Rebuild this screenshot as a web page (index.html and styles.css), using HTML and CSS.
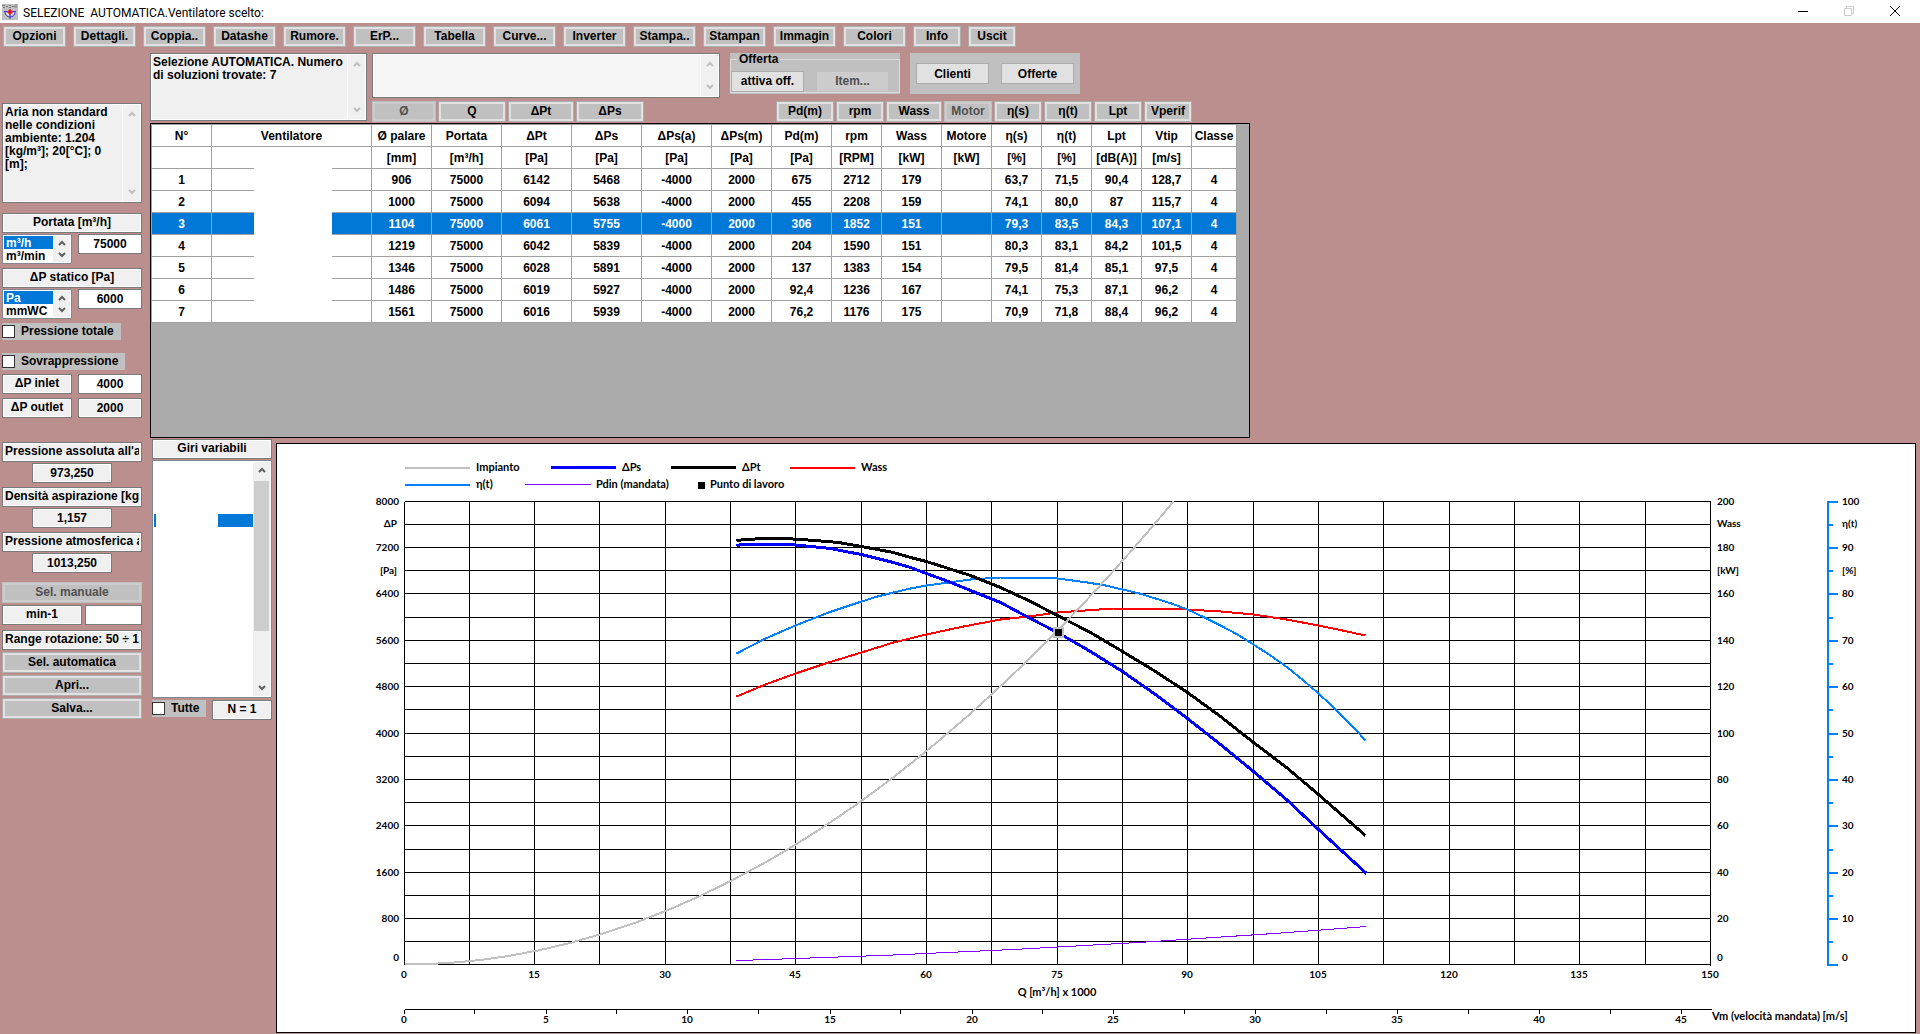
FILE: index.html
```html
<!DOCTYPE html>
<html lang="it">
<head>
<meta charset="utf-8">
<title>SELEZIONE AUTOMATICA.Ventilatore scelto:</title>
<link rel="stylesheet" href="styles.css">
</head>
<body>
<svg class="defs" width="0" height="0" aria-hidden="true">
  <symbol id="up" viewBox="0 0 8 6"><path d="M1 5 L4 2 L7 5" fill="none" stroke="currentColor" stroke-width="2"/></symbol>
  <symbol id="down" viewBox="0 0 8 6"><path d="M1 1 L4 4 L7 1" fill="none" stroke="currentColor" stroke-width="2"/></symbol>
</svg>

<header class="titlebar">
  <svg class="app-icon" viewBox="0 0 16 16" aria-hidden="true">
    <rect width="16" height="16" fill="#c0c0c0"/>
    <path d="M0 1.500h3M1 3.500h2M4 2.500h2M7 1.500h2M7 3.500h2M10 2.500h3M14 0v4" stroke="#777" fill="none"/>
    <path d="M2 7.500h12M3 8c0 3 2 5 5 5s5-2 5-5M8 5v10" stroke="#3a3ae0" fill="none"/>
    <path d="M4 9h3v3zM12 9H9v3z" fill="#e8e8ff"/>
    <path d="M8 5l3 3-3 3-3-3z" fill="#f01020"/>
  </svg>
  <h1 class="title">SELEZIONE  AUTOMATICA.Ventilatore scelto:</h1>
  <div class="window-controls">
    <button aria-label="Riduci a icona"><svg viewBox="0 0 10 10"><path d="M0 5.500h10" stroke="#000"/></svg></button>
    <button aria-label="Ripristina" disabled><svg viewBox="0 0 10 10"><path d="M.5 2.500h7v7h-7zM2.500 2.500v-2h7v7h-2" stroke="#ccc" fill="none"/></svg></button>
    <button aria-label="Chiudi"><svg viewBox="0 0 10 10"><path d="M0 0L10 10M10 0L0 10" stroke="#000"/></svg></button>
  </div>
</header>

<nav class="toolbar">
  <button class="btn">Opzioni</button>
  <button class="btn">Dettagli.</button>
  <button class="btn">Coppia..</button>
  <button class="btn">Datashe</button>
  <button class="btn">Rumore.</button>
  <button class="btn">ErP...</button>
  <button class="btn">Tabella</button>
  <button class="btn">Curve...</button>
  <button class="btn">Inverter</button>
  <button class="btn">Stampa..</button>
  <button class="btn">Stampan</button>
  <button class="btn">Immagin</button>
  <button class="btn">Colori</button>
  <button class="btn short">Info</button>
  <button class="btn short">Uscit</button>
</nav>

<div class="workspace">
  <aside class="sidebar">
    <div class="memo memo-air">
      <textarea readonly aria-label="Condizioni aria">Aria non standard nelle condizioni ambiente: 1.204 [kg/m³]; 20[°C]; 0 [m];</textarea>
      <span class="scroll off"><svg><use href="#up"/></svg><svg><use href="#down"/></svg></span>
    </div>

    <div class="params">
      <div class="stack">
        <label class="box" for="portata">Portata [m³/h]</label>
        <div class="pair">
          <div class="list unit">
            <select size="2" aria-label="Unità portata"><option selected>m³/h</option><option>m³/min</option></select>
            <span class="scroll"><svg><use href="#up"/></svg><svg><use href="#down"/></svg></span>
          </div>
          <input class="box field" id="portata" value="75000">
        </div>
      </div>
      <div class="stack">
        <label class="box" for="statico">ΔP statico [Pa]</label>
        <div class="pair">
          <div class="list unit">
            <select size="2" aria-label="Unità pressione"><option selected>Pa</option><option>mmWC</option></select>
            <span class="scroll"><svg><use href="#up"/></svg><svg><use href="#down"/></svg></span>
          </div>
          <input class="box field" id="statico" value="6000">
        </div>
      </div>
      <label class="check"><input type="checkbox">Pressione totale</label>
    </div>

    <div class="over">
      <label class="check"><input type="checkbox">Sovrappressione</label>
      <div class="pair"><label class="box half" for="inlet">ΔP inlet</label><input class="box field" id="inlet" value="4000"></div>
      <div class="pair"><label class="box half" for="outlet">ΔP outlet</label><input class="box field locked" id="outlet" value="2000" readonly></div>
    </div>

    <div class="readings">
      <div class="stack">
        <label class="box long" for="pabs">Pressione assoluta all'as</label>
        <input class="box reading" id="pabs" value="973,250" readonly>
      </div>
      <div class="stack">
        <label class="box long" for="dens">Densità aspirazione [kg/</label>
        <input class="box reading" id="dens" value="1,157" readonly>
      </div>
      <div class="stack">
        <label class="box long" for="patm">Pressione atmosferica a</label>
        <input class="box reading" id="patm" value="1013,250" readonly>
      </div>
    </div>

    <div class="actions">
      <button class="btn" disabled>Sel. manuale</button>
      <div class="pair"><label class="box rpm" for="rpm">min-1</label><input class="box field" id="rpm" value=""></div>
      <div class="box long range">Range rotazione: 50 ÷ 1</div>
      <button class="btn">Sel. automatica</button>
      <button class="btn">Apri...</button>
      <button class="btn">Salva...</button>
    </div>
  </aside>

  <main class="main">
    <div class="top">
      <div class="memo memo-result">
        <textarea readonly aria-label="Esito selezione">Selezione AUTOMATICA. Numero di soluzioni trovate: 7</textarea>
        <span class="scroll off"><svg><use href="#up"/></svg><svg><use href="#down"/></svg></span>
      </div>
      <div class="top-right">
        <div class="top-row">
          <div class="memo memo-notes">
            <textarea aria-label="Note"></textarea>
            <span class="scroll off"><svg><use href="#up"/></svg><svg><use href="#down"/></svg></span>
          </div>
          <div class="group">
            <fieldset>
              <legend>Offerta</legend>
              <button class="plain">attiva off.</button>
              <button class="plain" disabled>Item...</button>
            </fieldset>
          </div>
          <div class="group archive">
            <button class="plain">Clienti</button>
            <button class="plain">Offerte</button>
          </div>
        </div>
        <div class="sort">
          <button class="btn" disabled>Ø</button>
          <button class="btn">Q</button>
          <button class="btn">ΔPt</button>
          <button class="btn">ΔPs</button>
          <span></span>
          <button class="btn">Pd(m)</button>
          <button class="btn">rpm</button>
          <button class="btn">Wass</button>
          <button class="btn" disabled>Motor</button>
          <button class="btn">η(s)</button>
          <button class="btn">η(t)</button>
          <button class="btn">Lpt</button>
          <button class="btn">Vperif</button>
        </div>
      </div>
    </div>

    <div class="grid-panel">
      <table class="fans">
        <colgroup><col class="w60"><col class="w160"><col class="w60"><col class="w70"><col class="w70"><col class="w70"><col class="w70"><col class="w60"><col class="w60"><col class="w50"><col class="w60"><col class="w50"><col class="w50"><col class="w50"><col class="w50"><col class="w50"><col class="w45"></colgroup>
        <thead>
          <tr><th>N°</th><th>Ventilatore</th><th>Ø palare</th><th>Portata</th><th>ΔPt</th><th>ΔPs</th><th>ΔPs(a)</th><th>ΔPs(m)</th><th>Pd(m)</th><th>rpm</th><th>Wass</th><th>Motore</th><th>η(s)</th><th>η(t)</th><th>Lpt</th><th>Vtip</th><th>Classe</th></tr>
          <tr><th></th><th></th><th>[mm]</th><th>[m³/h]</th><th>[Pa]</th><th>[Pa]</th><th>[Pa]</th><th>[Pa]</th><th>[Pa]</th><th>[RPM]</th><th>[kW]</th><th>[kW]</th><th>[%]</th><th>[%]</th><th>[dB(A)]</th><th>[m/s]</th><th></th></tr>
        </thead>
        <tbody>
          <tr><td>1</td><td class="name"></td><td>906</td><td>75000</td><td>6142</td><td>5468</td><td>-4000</td><td>2000</td><td>675</td><td>2712</td><td>179</td><td></td><td>63,7</td><td>71,5</td><td>90,4</td><td>128,7</td><td>4</td></tr>
          <tr><td>2</td><td class="name"></td><td>1000</td><td>75000</td><td>6094</td><td>5638</td><td>-4000</td><td>2000</td><td>455</td><td>2208</td><td>159</td><td></td><td>74,1</td><td>80,0</td><td>87</td><td>115,7</td><td>4</td></tr>
          <tr class="selected"><td>3</td><td class="name"></td><td>1104</td><td>75000</td><td>6061</td><td>5755</td><td>-4000</td><td>2000</td><td>306</td><td>1852</td><td>151</td><td></td><td>79,3</td><td>83,5</td><td>84,3</td><td>107,1</td><td>4</td></tr>
          <tr><td>4</td><td class="name"></td><td>1219</td><td>75000</td><td>6042</td><td>5839</td><td>-4000</td><td>2000</td><td>204</td><td>1590</td><td>151</td><td></td><td>80,3</td><td>83,1</td><td>84,2</td><td>101,5</td><td>4</td></tr>
          <tr><td>5</td><td class="name"></td><td>1346</td><td>75000</td><td>6028</td><td>5891</td><td>-4000</td><td>2000</td><td>137</td><td>1383</td><td>154</td><td></td><td>79,5</td><td>81,4</td><td>85,1</td><td>97,5</td><td>4</td></tr>
          <tr><td>6</td><td class="name"></td><td>1486</td><td>75000</td><td>6019</td><td>5927</td><td>-4000</td><td>2000</td><td>92,4</td><td>1236</td><td>167</td><td></td><td>74,1</td><td>75,3</td><td>87,1</td><td>96,2</td><td>4</td></tr>
          <tr><td>7</td><td class="name"></td><td>1561</td><td>75000</td><td>6016</td><td>5939</td><td>-4000</td><td>2000</td><td>76,2</td><td>1176</td><td>175</td><td></td><td>70,9</td><td>71,8</td><td>88,4</td><td>96,2</td><td>4</td></tr>
        </tbody>
      </table>
    </div>

    <div class="lower">
      <section class="speeds">
        <label class="box" for="giri">Giri variabili</label>
        <div class="list speed-list">
          <select id="giri" size="18"><option></option><option></option><option></option><option></option><option selected></option></select>
          <span class="scroll"><svg><use href="#up"/></svg><i class="thumb"></i><svg><use href="#down"/></svg></span>
        </div>
        <div class="speed-foot">
          <label class="check"><input type="checkbox">Tutte</label>
          <output class="box count">N = 1</output>
        </div>
      </section>

      <section class="chart">
        <svg viewBox="277 444 1638 588" role="img" aria-label="Curve caratteristiche">
          <g class="crisp" transform="translate(.5 .5)">
            <path class="gridline" d="M404 501H1710M404 524H1710M404 547H1710M404 570H1710M404 593H1710M404 617H1710M404 640H1710M404 663H1710M404 686H1710M404 709H1710M404 733H1710M404 756H1710M404 779H1710M404 802H1710M404 825H1710M404 849H1710M404 872H1710M404 895H1710M404 918H1710M404 941H1710M404 964H1710"/>
            <path class="gridline" d="M404 501V964M469 501V964M534 501V964M599 501V964M665 501V964M730 501V964M795 501V964M861 501V964M926 501V964M991 501V964M1057 501V964M1122 501V964M1187 501V964M1253 501V964M1318 501V964M1383 501V964M1449 501V964M1514 501V964M1579 501V964M1645 501V964M1710 501V965"/>
            <path class="gridline" d="M404 1009H1711M404 1009V1013M474 1009V1013M546 1009V1013M616 1009V1013M687 1009V1013M758 1009V1013M830 1009V1013M900 1009V1013M972 1009V1013M1042 1009V1013M1113 1009V1013M1184 1009V1013M1255 1009V1013M1326 1009V1013M1397 1009V1013M1468 1009V1013M1539 1009V1013M1610 1009V1013M1681 1009V1013"/>
            <path class="line eta" d="M1827 500V965M1827 501H1837M1827 547H1837M1827 593H1837M1827 640H1837M1827 686H1837M1827 733H1837M1827 779H1837M1827 825H1837M1827 872H1837M1827 918H1837M1827 964H1837M1827 524H1832M1827 570H1832M1827 617H1832M1827 663H1832M1827 709H1832M1827 756H1832M1827 802H1832M1827 849H1832M1827 895H1832M1827 941H1832"/>
            <path class="line plant" d="M404 467H469"/>
            <path class="line ps" d="M550 467H615"/>
            <path class="line pt" d="M670 467H735"/>
            <path class="line wass" d="M789 467H854"/>
            <path class="line eta" d="M404 484H469"/>
            <path class="line pdin" d="M524 484H590"/>
            <rect x="697" y="481" width="7" height="7"/>
            <path class="line pdin" d="M736 960Q1051 951 1366 926"/>
            <path class="line wass" d="M736 696L765 684L795 673L828 662L861 652L893 642L926 634L963 626L1000 619L1028 616L1057 612L1085 610L1113 608H1170L1187 609L1220 611L1253 614L1286 619L1318 625L1342 630L1365 635"/>
            <path class="line eta" d="M736 653L765 638L795 625L828 612L861 601L877 596L893 592L910 588L926 585L948 582L970 579L1000 577H1035L1057 578L1087 582L1105 585L1122 589L1139 593L1155 598L1171 603L1187 609L1204 617L1220 625L1237 634L1253 644L1270 655L1287 667L1303 680L1318 693L1330 704L1342 716L1354 728L1365 740"/>
            <path class="line pt" d="M736 540L745 539L765 538H785L800 539L815 540L838 542L861 546L877 549L893 552L910 557L926 561L948 568L970 575L1000 587L1028 600L1057 615L1090 632L1122 651L1155 671L1187 692L1220 716L1253 742L1286 767L1318 794L1342 815L1365 835"/>
            <path class="line ps" d="M736 545L742 544H790L810 546L830 548L845 551L861 554L877 558L893 562L910 567L926 573L948 581L970 590L1000 602L1028 617L1057 632L1090 651L1122 671L1155 694L1187 718L1220 744L1253 771L1286 799L1318 829L1342 851L1366 873"/>
            <path class="line plant" d="M404 964Q788 964 1173 501"/>
            <rect class="halo" x="1052" y="626" width="11" height="11"/>
            <rect x="1054" y="628" width="7" height="7"/>
          </g>
          <g class="labels words">
            <text x="476" y="471">Impianto</text><text x="622" y="471">ΔPs</text><text x="742" y="471">ΔPt</text><text x="861" y="471">Wass</text>
            <text x="476" y="488">η(t)</text><text x="596" y="488">Pdin (mandata)</text><text x="710" y="488">Punto di lavoro</text>
            <text x="1712" y="1020">Vm (velocità mandata) [m/s]</text>
          </g>
          <g class="labels end">
            <text x="399" y="505">8000</text><text x="397" y="527">ΔP</text><text x="399" y="551">7200</text><text x="397" y="574">[Pa]</text><text x="399" y="597">6400</text><text x="399" y="644">5600</text><text x="399" y="690">4800</text><text x="399" y="737">4000</text><text x="399" y="783">3200</text><text x="399" y="829">2400</text><text x="399" y="876">1600</text><text x="399" y="922">800</text><text x="399" y="961">0</text>
          </g>
          <g class="labels">
            <text x="1717" y="505">200</text><text x="1717" y="527">Wass</text><text x="1717" y="551">180</text><text x="1717" y="574">[kW]</text><text x="1717" y="597">160</text><text x="1717" y="644">140</text><text x="1717" y="690">120</text><text x="1717" y="737">100</text><text x="1717" y="783">80</text><text x="1717" y="829">60</text><text x="1717" y="876">40</text><text x="1717" y="922">20</text><text x="1717" y="961">0</text>
            <text x="1842" y="505">100</text><text x="1842" y="527">η(t)</text><text x="1842" y="551">90</text><text x="1842" y="574">[%]</text><text x="1842" y="597">80</text><text x="1842" y="644">70</text><text x="1842" y="690">60</text><text x="1842" y="737">50</text><text x="1842" y="783">40</text><text x="1842" y="829">30</text><text x="1842" y="876">20</text><text x="1842" y="922">10</text><text x="1842" y="961">0</text>
          </g>
          <g class="labels mid">
            <text x="404" y="978">0</text><text x="534" y="978">15</text><text x="665" y="978">30</text><text x="795" y="978">45</text><text x="926" y="978">60</text><text x="1057" y="978">75</text><text x="1187" y="978">90</text><text x="1318" y="978">105</text><text x="1449" y="978">120</text><text x="1579" y="978">135</text><text x="1710" y="978">150</text>
            <text class="words" x="1057" y="996">Q [m³/h] x 1000</text>
            <text x="404" y="1023">0</text><text x="546" y="1023">5</text><text x="687" y="1023">10</text><text x="830" y="1023">15</text><text x="972" y="1023">20</text><text x="1113" y="1023">25</text><text x="1255" y="1023">30</text><text x="1397" y="1023">35</text><text x="1539" y="1023">40</text><text x="1681" y="1023">45</text>
          </g>
        </svg>
      </section>
    </div>
  </main>
</div>
</body>
</html>
```
FILE: styles.css
```css
* { box-sizing: border-box; }

body {
  margin: 0;
  background: #bc8f8f;
  color: #000;
  font: bold 12px/13px "Liberation Sans", Arial, sans-serif;
}

button, input, textarea, select, option { font: inherit; color: inherit; margin: 0; border-radius: 0; }
.defs { display: block; position: absolute; }

/* Window frame */
.titlebar {
  display: flex;
  align-items: center;
  height: 23px;
  padding-left: 2px;
  background: #fff;
}
.app-icon { width: 16px; height: 16px; }
.title {
  flex: 1;
  margin: 2px 0 0 5px;
  font: 12px/16px "Roboto", sans-serif;
  white-space: pre;
}
.window-controls { display: flex; padding-right: 2px; align-self: flex-start; }
.window-controls button {
  width: 46px;
  height: 21px;
  padding: 0;
  border: 0;
  background: none;
  line-height: 0;
}
.window-controls svg { width: 10px; height: 10px; }

/* Buttons */
.btn {
  height: 21px;
  padding: 0;
  border: 1px solid #adadad;
  background: #c0c0c0;
  box-shadow: inset 0 0 0 2px #e1e1e1;
  line-height: 19px;
  text-align: center;
  white-space: nowrap;
  overflow: hidden;
}
.btn:disabled { border-color: #bfbfbf; box-shadow: inset 0 0 0 2px #ccc; color: #505050; }
.plain {
  width: 73px;
  height: 21px;
  padding: 1px 0 0;
  border: 1px solid #adadad;
  background: #e1e1e1;
}
.plain:disabled { border-color: #c0c0c0; background: #ccc; color: #505050; }

.toolbar { display: flex; gap: 7px; padding: 3px 3px 6px; }
.toolbar .btn { width: 63px; }
.toolbar .short { width: 48px; }

/* Boxes, memos and lists */
.box {
  display: block;
  height: 20px;
  padding: 0 2px;
  border: 1px solid #7a7a7a;
  background: #f0f0f0;
  box-shadow: inset 0 0 0 1px #fff;
  line-height: 17px;
  text-align: center;
  white-space: nowrap;
}
.long { overflow: clip; overflow-clip-margin: content-box; text-align: left; }
.field { width: 64px; background: #fff; }
.locked { background: #f0f0f0; }

.memo { display: flex; padding: 1px; border: 1px solid #7a7a7a; background: #fff; }
.memo textarea {
  flex: 1;
  min-width: 0;
  padding: 1px;
  border: 0;
  background: #f0f0f0;
  resize: none;
  overflow: hidden;
}
.scroll {
  display: flex;
  flex-direction: column;
  justify-content: space-between;
  align-items: center;
  width: 17px;
  padding: 5px 0;
  background: #f0f0f0;
  color: #606060;
}
.scroll svg { width: 8px; height: 6px; flex: none; }
.scroll.off { margin-left: 1px; color: #bfbfbf; padding: 6px 0; }

.list { display: flex; padding: 1px; border: 1px solid #828790; background: #fff; }
.list select {
  flex: 1;
  min-width: 0;
  height: 100%;
  padding: 0;
  border: 0;
  outline: 0;
  background: #fff;
  overflow: hidden;
  appearance: none;
}
.list option { min-height: 13px; height: 13px; padding: 0 0 0 2px; line-height: 13px; }
.list option:checked {
  background: #0078d7 linear-gradient(#0078d7, #0078d7);
  color: #fff;
  -webkit-text-fill-color: #fff;
}

.check {
  display: flex;
  align-items: center;
  gap: 6px;
  width: fit-content;
  height: 17px;
  padding-right: 7px;
  background: #c0c0c0;
}
.check input {
  width: 13px;
  height: 13px;
  border: 1px solid #333;
  background: #fff;
  appearance: none;
}

/* Layout */
.workspace { display: flex; gap: 8px; padding-left: 2px; }
.sidebar { flex: none; width: 140px; padding-top: 50px; }
.main { flex: 1; min-width: 0; }

.memo-air { height: 100px; }
.params, .over, .readings, .actions, .stack { display: flex; flex-direction: column; }
.params { gap: 4px; margin-top: 10px; }
.over { gap: 4px; margin-top: 13px; }
.readings { gap: 4px; margin-top: 24px; }
.actions { gap: 2px; margin-top: 9px; }
.stack { gap: 1px; }
.pair { display: flex; justify-content: space-between; }
.unit { width: 70px; height: 30px; }
.unit .scroll { padding: 4px 0; }
.half { width: 70px; }
.rpm { width: 80px; }
.pair .rpm + .field { width: 57px; }
.reading { width: 80px; align-self: center; }
.range { margin-top: 3px; }

.top { display: flex; gap: 5px; }
.memo-result { width: 217px; height: 68px; }
.top-row { display: flex; align-items: flex-start; gap: 10px; margin-bottom: 3px; }
.memo-notes { width: 348px; height: 45px; }
.memo-notes textarea { background: #f5f5f5; }
.group { width: 170px; height: 41px; background: #c0c0c0; }
.group fieldset {
  display: flex;
  align-items: center;
  gap: 12px;
  height: 40px;
  margin: 0;
  padding: 4px 0 0;
  border: 1px solid #dcdcdc;
}
.group legend { margin-left: 6px; padding: 0 2px; }
.archive { display: flex; align-items: center; justify-content: center; gap: 12px; }
.sort {
  display: grid;
  grid-template-columns: 64px 68px 66px 68px 128px 58px 48px 56px 48px 48px 48px 48px 48px;
  gap: 2px;
}

.grid-panel {
  width: 1100px;
  height: 315px;
  margin-top: 1px;
  border: 1px solid #000;
  background: #ababab;
}
.fans { width: 1086px; table-layout: fixed; border-collapse: separate; border-spacing: 0; border: solid #a0a0a0; border-width: 1px 0 0 1px; }
.fans th, .fans td {
  position: relative;
  height: 22px;
  padding: 2px 0 0;
  border: solid #a0a0a0;
  border-width: 0 1px 1px 0;
  background: #fff;
  text-align: center;
  white-space: nowrap;
}
.fans .selected td { background: #0078d7; color: #fff; }
/* Blank strip laid over the fan names and the row lines between them */
.fans .name::after {
  content: "";
  position: absolute;
  inset: -1px auto 0 42px;
  width: 78px;
  background: #fff;
}
.w45 { width: 45px; }
.w50 { width: 50px; }
.w60 { width: 60px; }
.w70 { width: 70px; }
.w160 { width: 160px; }

.lower { display: flex; gap: 4px; padding: 1px 4px 0 2px; }
.speeds { flex: none; width: 120px; }
.speed-list { height: 238px; margin: 1px 0 2px; }
.speed-list .scroll { justify-content: flex-start; gap: 8px; }
.speed-list .scroll svg:last-child { margin-top: auto; }
.thumb { width: 15px; height: 150px; background: #cdcdcd; }
.speed-list option:checked {
  background: #fff linear-gradient(to right, #0078d7 2px, #fff 2px, #fff 64px, #0078d7 64px);
}
.speed-foot { display: flex; justify-content: space-between; }
.count { width: 60px; }

/* Chart */
.chart { flex: 1; min-width: 0; margin-top: 4px; border: 1px solid #000; background: #fff; align-self: flex-start; }
.chart svg { display: block; width: 100%; }
.crisp { shape-rendering: crispEdges; }
.gridline { stroke: #000; fill: none; }
.line { fill: none; stroke-width: 2px; }
.plant { stroke: #c0c0c0; }
.halo { fill: #c0c0c0; }
.pt { stroke: #000; stroke-width: 3px; }
.ps { stroke: #00f; stroke-width: 3px; }
.wass { stroke: #f00; }
.eta { stroke: #0080ff; }
.pdin { stroke: #8000ff; stroke-width: 1px; }
.labels { font: bold 10px "Lato", sans-serif; }
.words { font-size: 11px; }
.end { text-anchor: end; }
.mid { text-anchor: middle; }
```
